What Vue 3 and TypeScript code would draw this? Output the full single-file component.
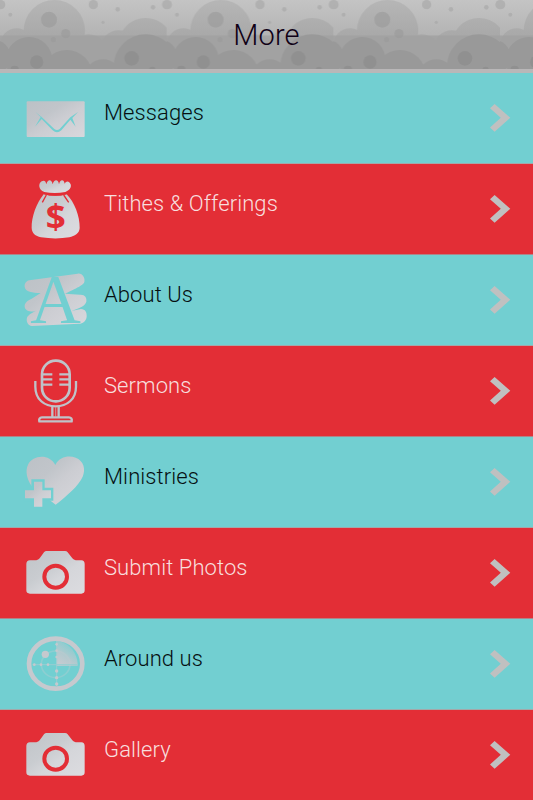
<script setup lang="ts">
type IconName = 'mail' | 'bag' | 'letter' | 'mic' | 'heart' | 'camera' | 'radar'

interface MenuItem {
  label: string
  icon: IconName
}

const items: MenuItem[] = [
  { label: 'Messages', icon: 'mail' },
  { label: 'Tithes & Offerings', icon: 'bag' },
  { label: 'About Us', icon: 'letter' },
  { label: 'Sermons', icon: 'mic' },
  { label: 'Ministries', icon: 'heart' },
  { label: 'Submit Photos', icon: 'camera' },
  { label: 'Around us', icon: 'radar' },
  { label: 'Gallery', icon: 'camera' },
]
</script>

<template>
  <main class="screen">
    <header class="header">
      <svg class="pattern" width="533" height="69" viewBox="0 0 533 69" aria-hidden="true">
        <defs>
          <linearGradient id="sky" x1="0" y1="0" x2="0" y2="1">
            <stop offset="0" stop-color="#c4c4c4" />
            <stop offset="0.5" stop-color="#b4b4b4" />
            <stop offset="0.53" stop-color="#a6a6a6" />
            <stop offset="1" stop-color="#a2a2a2" />
          </linearGradient>
          <linearGradient id="cloud" gradientUnits="userSpaceOnUse" x1="0" y1="0" x2="0" y2="108">
            <stop offset="0" stop-color="#b6b6b6" />
            <stop offset="0.97" stop-color="#a9a9a9" />
            <stop offset="1" stop-color="#a1a1a1" />
          </linearGradient>
          <linearGradient id="silver" x1="0" y1="0" x2="1" y2="1">
            <stop offset="0" stop-color="#bcc1c6" />
            <stop offset="0.35" stop-color="#c1c5ca" />
            <stop offset="0.55" stop-color="#cccdd2" />
            <stop offset="1" stop-color="#d8d8dd" />
          </linearGradient>
          <linearGradient id="silver-light" x1="0" y1="0" x2="1" y2="1">
            <stop offset="0" stop-color="#c0c4c8" />
            <stop offset="0.4" stop-color="#c9ccd0" />
            <stop offset="0.6" stop-color="#d5d6da" />
            <stop offset="1" stop-color="#dcdce0" />
          </linearGradient>
          <linearGradient id="sweep" x1="0" y1="1" x2="0.6" y2="0">
            <stop offset="0" stop-color="#cbccd2" />
            <stop offset="0.45" stop-color="#c5c8ce" stop-opacity=".8" />
            <stop offset="1" stop-color="#c5c8ce" stop-opacity=".15" />
          </linearGradient>
          <pattern id="hills" width="500" height="207" patternUnits="userSpaceOnUse" patternTransform="scale(.33333)">
            <g fill="url(#cloud)">
              <circle cx="163" cy="92" r="92" />
              <circle cx="437" cy="136" r="82" />
              <circle cx="50" cy="135" r="50" />
              <circle cx="355" cy="145" r="54" />
              <circle cx="265" cy="163" r="60" />
            </g>
            <path d="M0 107H500V207H0z" fill="#a2a2a2" opacity=".75" />
            <g fill="#999">
              <circle cx="87" cy="181" r="70" />
              <circle cx="200" cy="228" r="78" />
              <circle cx="309" cy="235" r="57" />
              <circle cx="437" cy="199" r="96" />
              <circle cx="-20" cy="171" r="52" />
            </g>
            <g fill="#999" opacity=".6">
              <circle cx="147" cy="59" r="24" />
              <circle cx="197" cy="101" r="14" />
              <circle cx="160" cy="119" r="8" />
            </g>
            <g fill="#a5a5a5" opacity=".6">
              <circle cx="280" cy="14" r="14" />
              <circle cx="2" cy="14" r="14" />
              <circle cx="500" cy="14" r="14" />
              <circle cx="31" cy="44" r="6" />
              <circle cx="353" cy="28" r="7" />
              <circle cx="459" cy="22" r="7" />
              <circle cx="309" cy="67" r="5" />
            </g>
            <g fill="#909090">
              <circle cx="110" cy="186" r="20" />
              <circle cx="395" cy="175" r="22" />
              <ellipse cx="44" cy="205" rx="12" ry="8" />
              <ellipse cx="457" cy="206" rx="9" ry="6" />
            </g>
          </pattern>
        </defs>
        <rect width="533" height="69" fill="url(#sky)" />
        <rect width="533" height="69" fill="url(#hills)" />
      </svg>
      <h1 class="title">More</h1>
    </header>

    <nav class="menu">
      <a v-for="item in items" :key="item.label" class="row">
        <svg class="icon" width="104" height="90" viewBox="0 0 104 90" aria-hidden="true">
          <g v-if="item.icon === 'mail'" transform="translate(10 7) scale(.33333)">
            <rect x="50" y="64" width="174" height="107" rx="3" fill="url(#silver)" />
            <path class="cut" d="M76 96L92 111L75 140L95 117L128 151Q141 163 154 151L181 119L197 140L187 114L204 96L181 112L149 147Q141 153 133 147L95 111z" />
          </g>

          <g v-else-if="item.icon === 'bag'" transform="translate(10 6) scale(.33333)">
            <path fill="url(#silver-light)" d="M103 66C85 60 84 40 95 34C102 30 107 32 109 43C113 27 125 27 128 43C132 27 145 27 147 43C150 27 162 27 164 41C169 31 178 33 182 43C185 53 178 62 166 66Q134 72 103 66z" />
            <path fill="url(#silver-light)" d="M101 73Q135 82 170 73C193 96 210 139 209 174C208 191 194 198 178 202Q137 209 93 202C76 198 66 190 65 174C64 141 80 98 101 73z" />
            <path class="cut-line" stroke-width="4" d="M103 71Q135 80 170 71M109 75L97 97M161 75L176 97" />
            <text class="cut dollar" x="137" y="178" text-anchor="middle" textLength="60" lengthAdjust="spacingAndGlyphs">$</text>
          </g>

          <g v-else-if="item.icon === 'letter'" transform="translate(10 5) scale(.33333)">
            <path fill="url(#silver)" d="M58 61L203 41C218 39 226 55 223 66C220 74 210 80 165 101L210 104C225 103 231 113 229 125C225 139 208 144 184 153L213 147C226 147 231 158 230 170C228 184 218 191 207 191L66 198C53 197 48 183 51 173C54 165 62 161 78 152C56 159 44 150 44 139C44 128 52 122 65 116L92 99C67 98 46 96 44 80C43 70 49 63 58 61z" />
            <text class="cut serif" x="137" y="190" text-anchor="middle" textLength="152" lengthAdjust="spacingAndGlyphs">A</text>
          </g>

          <g v-else-if="item.icon === 'mic'" transform="translate(10 4) scale(.33333)" fill="none" stroke="#bfc3c9" stroke-width="8">
            <rect x="96" y="32" width="83" height="122" rx="41" />
            <path d="M96 73H127M96 88H127M96 104H127M179 73H148M179 88H148M179 104H148" stroke-width="7" />
            <path d="M76 93V110C76 148 103 169 137 169S198 148 198 110V93" stroke-width="7" />
            <path d="M127 170V202M146 170V202M88 214H185C187 207 183 202 177 202H96C89 202 86 208 88 214z" stroke-width="7" />
            <path d="M137 172V200" stroke-width="2" />
          </g>

          <g v-else-if="item.icon === 'heart'" transform="translate(10 5) scale(.33333)">
            <path fill="url(#silver)" d="M136 69C149 43 177 40 197 47C221 56 228 81 218 104C207 130 170 162 137 188L65 132C51 112 45 87 54 68C69 38 118 35 136 69z" />
            <path class="cut" d="M64 112H104V137H130V176H110V200H64V178H40V138H64z" />
            <path fill="url(#silver)" d="M72 119H97V145H123V169H97V194H72V169H45V145H72z" />
          </g>

          <g v-else-if="item.icon === 'camera'" transform="translate(10 4) scale(.33333)">
            <path fill="url(#silver-light)" d="M60 85H79Q85 84 89 79L102 61Q105 57 110 57H165Q170 57 173 61L187 79Q191 84 197 85H214Q224 86 224 96V175Q224 185 214 185H60Q49 185 49 175V96Q49 86 60 85z" />
            <ellipse class="cut-line" cx="137" cy="134" rx="34" ry="33" stroke-width="12" />
          </g>

          <g v-else transform="translate(10 5) scale(.33333)">
            <ellipse cx="137" cy="119" rx="80" ry="75" fill="none" stroke="#c6c9ce" stroke-width="14" />
            <ellipse cx="137" cy="121" rx="43" ry="40" fill="none" stroke="#8dced1" stroke-width="5" />
            <path d="M138 125V51C174 53 203 83 203 125z" fill="url(#sweep)" />
            <path d="M140 51V187M67 122H203" stroke="#98cdd1" stroke-width="3" />
            <g fill="#c5c9ce">
              <circle cx="106" cy="91" r="11" />
              <circle cx="140" cy="61" r="4" /><circle cx="140" cy="80" r="4" />
              <circle cx="140" cy="99" r="4" /><circle cx="140" cy="141" r="5" />
              <circle cx="140" cy="161" r="5" /><circle cx="140" cy="180" r="5" />
              <circle cx="73" cy="122" r="4" /><circle cx="93" cy="122" r="4" />
              <circle cx="114" cy="122" r="4" />
            </g>
          </g>
        </svg>
        <span class="label">{{ item.label }}</span>
        <svg class="chevron" width="22" height="30" viewBox="0 0 22 30" aria-hidden="true">
          <path d="M0 4.2L4.6 0L20.3 13.8L4.6 27.8L0 23.5L10.8 13.8z" fill="#c0c0c0" />
        </svg>
      </a>
    </nav>
  </main>
</template>

<style>
body {
  margin: 0;
  overflow: hidden;
}
</style>

<style scoped>
.screen {
  width: 533px;
  height: 800px;
  overflow: hidden;
  font-family: Roboto, "Liberation Sans", sans-serif;
  font-weight: 300;
}

.header {
  display: grid;
  box-sizing: border-box;
  height: 73px;
  border-bottom: 4px solid #b9b7b8;
  background: #a2a2a2;
}

.pattern,
.title {
  grid-area: 1 / 1;
}

.pattern {
  display: block;
}

.title {
  margin: 0;
  padding-top: 17px;
  font-size: 29px;
  line-height: 36px;
  font-weight: 300;
  letter-spacing: 0.2px;
  text-align: center;
  color: #100016;
}

.row {
  --tone: #72cfd1;
  display: flex;
  box-sizing: border-box;
  height: 90.95px;
  border-bottom: 1px solid #a4a8a9;
  background: var(--tone);
  color: #061011;
}

.row:nth-child(even) {
  --tone: #e32e36;
  border-bottom-color: #b08388;
  color: #f8dede;
}

.icon {
  display: block;
  flex: none;
}

.cut {
  fill: var(--tone);
}

.cut-line {
  fill: none;
  stroke: var(--tone);
}

.dollar {
  font: 700 104px "Open Sans", "Liberation Sans", sans-serif;
}

.serif {
  font: 400 208px "Liberation Serif", serif;
}

.label {
  flex: 1;
  padding-top: 26px;
  font-size: 22px;
  line-height: 28px;
  letter-spacing: 0.08px;
}

.chevron {
  flex: none;
  margin: 31px 21px 0 0;
}
</style>
